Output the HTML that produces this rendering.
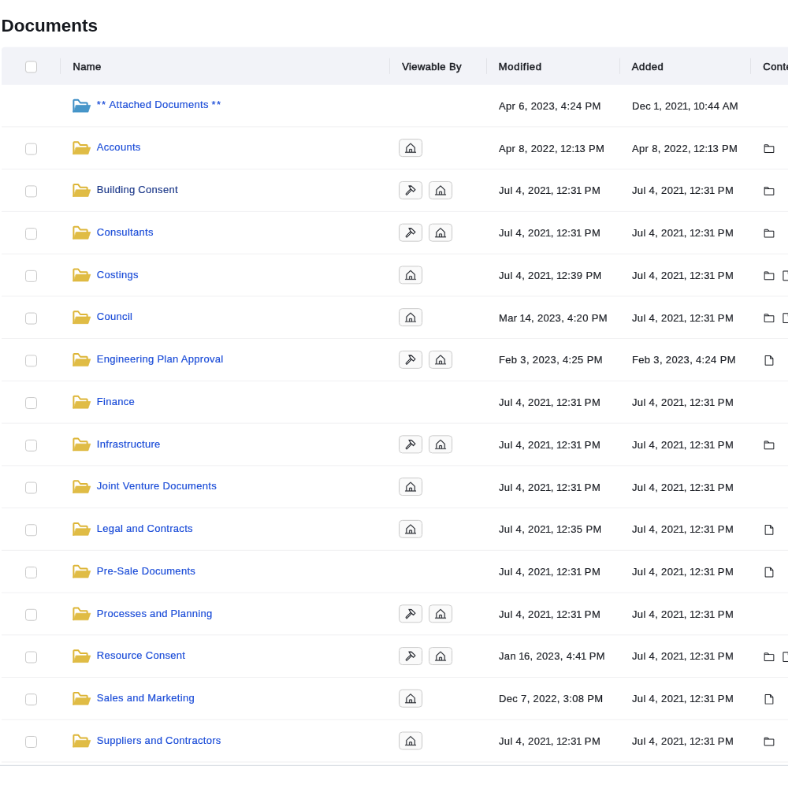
<!DOCTYPE html>
<html lang="en"><head><meta charset="utf-8"><title>Documents</title>
<style>
html,body{margin:0;padding:0;background:#fff;}
body{width:788px;height:788px;overflow:hidden;font-family:"Liberation Sans",Arial,sans-serif;}
#root{position:absolute;left:0;top:0;width:1000px;height:1000px;transform:scale(.788);transform-origin:0 0;will-change:transform;color:#1f2229;font-size:13px;line-height:15px;}
#root *{position:absolute;left:0;top:0;margin:0;box-sizing:border-box;white-space:nowrap;}
#root b{position:static;font-weight:inherit;margin:0 -.78px;}
#root i{position:static;font-style:normal;letter-spacing:1.25px;}
h1{font-size:22.5px;line-height:28px;font-weight:700;color:#15181e;}
.hd{background:#f2f3f8;border-radius:4px 0 0 0;width:1010px;}
.ht{color:#1a1c22;-webkit-text-stroke:.5px #1a1c22;letter-spacing:.35px;}
.vs{width:1px;height:20px;background:#e3e4e9;}
.cb{width:15px;height:15px;border:1px solid #c9c9c9;border-radius:3.5px;background:#fff;}
.sep{width:1010px;height:1px;background:#f0f0f2;}
.fo{color:#ddb536;}
.fo .ff{fill:#e0bc45;}
.fo.blue{color:#3c8dc5;}
.fo.blue .ff{fill:#4796c9;}
a{color:#1d4ed8;-webkit-text-stroke:.2px #1d4ed8;text-decoration:none;letter-spacing:.3px;}
a.hover{color:#1e3a8a;-webkit-text-stroke:.2px #1e3a8a;}
.d{color:#202329;-webkit-text-stroke:.2px #202329;letter-spacing:.34px;}
.bd{width:30px;height:23px;border:1px solid #cbcbcb;border-radius:4.5px;background:#fafafa;}
.bi{color:#2c2f36;}
.hs path{stroke:currentColor;stroke-width:4px;}
.ci{color:#22252b;}
.ci path{stroke:currentColor;stroke-width:1px;}
.end{width:1010px;height:1px;background:#d4dae0;}
</style></head><body><div id="root">
<h1 style="transform:translate(1.6px,18.6px)">Documents</h1>
<div class="hd" style="transform:translate(2px,59.8px);height:48.2px"></div>
<div class="cb" style="transform:translate(32px,77.4px)"></div>
<div class="vs" style="transform:translate(76px,73.9px)"></div><div class="vs" style="transform:translate(494px,73.9px)"></div><div class="vs" style="transform:translate(617px,73.9px)"></div><div class="vs" style="transform:translate(786px,73.9px)"></div><div class="vs" style="transform:translate(952px,73.9px)"></div><span class="ht" style="transform:translate(92.4px,76.79px);letter-spacing:0.4px">Name</span><span class="ht" style="transform:translate(510.2px,76.79px);letter-spacing:0.4px">Viewable By</span><span class="ht" style="transform:translate(632.8px,76.79px);letter-spacing:0.72px">Modified</span><span class="ht" style="transform:translate(801.8px,76.79px);letter-spacing:0.6px">Added</span><span class="ht" style="transform:translate(968.3px,76.79px);letter-spacing:0.45px">Contents</span>
<svg class="fo blue" width="26" height="26" viewBox="0 0 256 256" style="transform:translate(90px,120.5px)"><g stroke="currentColor" stroke-linejoin="round" stroke-linecap="round"><path d="M33.500,206.500 V69.500 a8,8 0 0 1 8,-8 H90 L118,98.500 H195 a8,8 0 0 1 8,8 V130" fill="none" stroke-width="19"/><path class="ff" d="M65,127.500 H244 L215,213 H28 Z" stroke-width="6"/></g></svg><a style="transform:translate(122.8px,125.29px)"><i>**</i> Attached Documents <i>**</i></a><span class="d" style="transform:translate(633px,127.04px)">Apr 6, 2023, 4:24 PM</span><span class="d" style="transform:translate(802px,127.04px)">Dec <b>1</b>, 202<b>1</b>, <b>1</b>0:44 AM</span><div class="sep" style="transform:translate(2px,160.4px)"></div>
<div class="cb" style="transform:translate(32px,181.62px)"></div><svg class="fo" width="26" height="26" viewBox="0 0 256 256" style="transform:translate(90px,174.07px)"><g stroke="currentColor" stroke-linejoin="round" stroke-linecap="round"><path d="M33.500,206.500 V69.500 a8,8 0 0 1 8,-8 H90 L118,98.500 H195 a8,8 0 0 1 8,8 V130" fill="none" stroke-width="19"/><path class="ff" d="M65,127.500 H244 L215,213 H28 Z" stroke-width="6"/></g></svg><a style="transform:translate(122.8px,179.36px)">Accounts</a><div class="bd" style="transform:translate(506.05px,176.17px)"></div><svg class="bi hs" width="15.1" height="15.1" viewBox="0 0 256 256" style="transform:translate(513.5px,180.44px)"><path d="M240,208H224V115.55a16,16,0,0,0-5.17-11.78l-80-75.48a1.14,1.14,0,0,1-.11-.11,16,16,0,0,0-21.53,0l-.11.11L37.17,103.77A16,16,0,0,0,32,115.55V208H16a8,8,0,0,0,0,16H240a8,8,0,0,0,0-16ZM48,115.55l.11-.1L128,40l79.9,75.43.11.1V208H160V160a16,16,0,0,0-16-16H112a16,16,0,0,0-16,16v48H48ZM144,208H112V160h32Z" fill="currentColor"/></svg><span class="d" style="transform:translate(633px,180.61px)">Apr 8, 2022, <b>1</b>2:<b>1</b>3 PM</span><span class="d" style="transform:translate(802px,180.61px)">Apr 8, 2022, <b>1</b>2:<b>1</b>3 PM</span><svg class="ci" width="15.6" height="15.6" viewBox="0 0 256 256" style="transform:translate(968.2px,180.87px)"><path d="M216,72H131.31L104,44.69A15.86,15.86,0,0,0,92.69,40H40A16,16,0,0,0,24,56V200.62A15.4,15.4,0,0,0,39.38,216H216.89A15.13,15.13,0,0,0,232,200.89V88A16,16,0,0,0,216,72ZM40,56H92.69l16,16H40ZM216,200H40V88H216Z" fill="currentColor"/></svg><div class="sep" style="transform:translate(2px,214.14px)"></div>
<div class="cb" style="transform:translate(32px,235.36px)"></div><svg class="fo" width="26" height="26" viewBox="0 0 256 256" style="transform:translate(90px,227.81px)"><g stroke="currentColor" stroke-linejoin="round" stroke-linecap="round"><path d="M33.500,206.500 V69.500 a8,8 0 0 1 8,-8 H90 L118,98.500 H195 a8,8 0 0 1 8,8 V130" fill="none" stroke-width="19"/><path class="ff" d="M65,127.500 H244 L215,213 H28 Z" stroke-width="6"/></g></svg><a class="hover" style="transform:translate(122.8px,233.1px)">Building Consent</a><div class="bd" style="transform:translate(506.05px,229.91px)"></div><svg class="bi" width="16" height="16" viewBox="0 0 256 256" style="transform:translate(512.65px,233.21px)"><g fill="none" stroke="currentColor" stroke-linecap="round" stroke-linejoin="round"><path d="M54,208 L144,118" stroke-width="46"/><path d="M54,208 L134,128" stroke="#fafafa" stroke-width="15"/><path d="M104,46 L150,46 L228,120 L190,158 L130,98 Z" stroke-width="19" fill="#fafafa"/><path d="M100,42 L148,42 L126,64 Z" stroke-width="8" fill="currentColor"/></g></svg><div class="bd" style="transform:translate(544.05px,229.91px)"></div><svg class="bi hs" width="15.1" height="15.1" viewBox="0 0 256 256" style="transform:translate(551.5px,234.18px)"><path d="M240,208H224V115.55a16,16,0,0,0-5.17-11.78l-80-75.48a1.14,1.14,0,0,1-.11-.11,16,16,0,0,0-21.53,0l-.11.11L37.17,103.77A16,16,0,0,0,32,115.55V208H16a8,8,0,0,0,0,16H240a8,8,0,0,0,0-16ZM48,115.55l.11-.1L128,40l79.9,75.43.11.1V208H160V160a16,16,0,0,0-16-16H112a16,16,0,0,0-16,16v48H48ZM144,208H112V160h32Z" fill="currentColor"/></svg><span class="d" style="transform:translate(633px,234.35px)">Jul 4, 202<b>1</b>, <b>1</b>2:3<b>1</b> PM</span><span class="d" style="transform:translate(802px,234.35px)">Jul 4, 202<b>1</b>, <b>1</b>2:3<b>1</b> PM</span><svg class="ci" width="15.6" height="15.6" viewBox="0 0 256 256" style="transform:translate(968.2px,234.61px)"><path d="M216,72H131.31L104,44.69A15.86,15.86,0,0,0,92.69,40H40A16,16,0,0,0,24,56V200.62A15.4,15.4,0,0,0,39.38,216H216.89A15.13,15.13,0,0,0,232,200.89V88A16,16,0,0,0,216,72ZM40,56H92.69l16,16H40ZM216,200H40V88H216Z" fill="currentColor"/></svg><div class="sep" style="transform:translate(2px,267.88px)"></div>
<div class="cb" style="transform:translate(32px,289.1px)"></div><svg class="fo" width="26" height="26" viewBox="0 0 256 256" style="transform:translate(90px,281.55px)"><g stroke="currentColor" stroke-linejoin="round" stroke-linecap="round"><path d="M33.500,206.500 V69.500 a8,8 0 0 1 8,-8 H90 L118,98.500 H195 a8,8 0 0 1 8,8 V130" fill="none" stroke-width="19"/><path class="ff" d="M65,127.500 H244 L215,213 H28 Z" stroke-width="6"/></g></svg><a style="transform:translate(122.8px,286.84px)">Consultants</a><div class="bd" style="transform:translate(506.05px,283.65px)"></div><svg class="bi" width="16" height="16" viewBox="0 0 256 256" style="transform:translate(512.65px,286.95px)"><g fill="none" stroke="currentColor" stroke-linecap="round" stroke-linejoin="round"><path d="M54,208 L144,118" stroke-width="46"/><path d="M54,208 L134,128" stroke="#fafafa" stroke-width="15"/><path d="M104,46 L150,46 L228,120 L190,158 L130,98 Z" stroke-width="19" fill="#fafafa"/><path d="M100,42 L148,42 L126,64 Z" stroke-width="8" fill="currentColor"/></g></svg><div class="bd" style="transform:translate(544.05px,283.65px)"></div><svg class="bi hs" width="15.1" height="15.1" viewBox="0 0 256 256" style="transform:translate(551.5px,287.92px)"><path d="M240,208H224V115.55a16,16,0,0,0-5.17-11.78l-80-75.48a1.14,1.14,0,0,1-.11-.11,16,16,0,0,0-21.53,0l-.11.11L37.17,103.77A16,16,0,0,0,32,115.55V208H16a8,8,0,0,0,0,16H240a8,8,0,0,0,0-16ZM48,115.55l.11-.1L128,40l79.9,75.43.11.1V208H160V160a16,16,0,0,0-16-16H112a16,16,0,0,0-16,16v48H48ZM144,208H112V160h32Z" fill="currentColor"/></svg><span class="d" style="transform:translate(633px,288.09px)">Jul 4, 202<b>1</b>, <b>1</b>2:3<b>1</b> PM</span><span class="d" style="transform:translate(802px,288.09px)">Jul 4, 202<b>1</b>, <b>1</b>2:3<b>1</b> PM</span><svg class="ci" width="15.6" height="15.6" viewBox="0 0 256 256" style="transform:translate(968.2px,288.35px)"><path d="M216,72H131.31L104,44.69A15.86,15.86,0,0,0,92.69,40H40A16,16,0,0,0,24,56V200.62A15.4,15.4,0,0,0,39.38,216H216.89A15.13,15.13,0,0,0,232,200.89V88A16,16,0,0,0,216,72ZM40,56H92.69l16,16H40ZM216,200H40V88H216Z" fill="currentColor"/></svg><div class="sep" style="transform:translate(2px,321.62px)"></div>
<div class="cb" style="transform:translate(32px,342.84px)"></div><svg class="fo" width="26" height="26" viewBox="0 0 256 256" style="transform:translate(90px,335.29px)"><g stroke="currentColor" stroke-linejoin="round" stroke-linecap="round"><path d="M33.500,206.500 V69.500 a8,8 0 0 1 8,-8 H90 L118,98.500 H195 a8,8 0 0 1 8,8 V130" fill="none" stroke-width="19"/><path class="ff" d="M65,127.500 H244 L215,213 H28 Z" stroke-width="6"/></g></svg><a style="transform:translate(122.8px,340.58px)">Costings</a><div class="bd" style="transform:translate(506.05px,337.39px)"></div><svg class="bi hs" width="15.1" height="15.1" viewBox="0 0 256 256" style="transform:translate(513.5px,341.66px)"><path d="M240,208H224V115.55a16,16,0,0,0-5.17-11.78l-80-75.48a1.14,1.14,0,0,1-.11-.11,16,16,0,0,0-21.53,0l-.11.11L37.17,103.77A16,16,0,0,0,32,115.55V208H16a8,8,0,0,0,0,16H240a8,8,0,0,0,0-16ZM48,115.55l.11-.1L128,40l79.9,75.43.11.1V208H160V160a16,16,0,0,0-16-16H112a16,16,0,0,0-16,16v48H48ZM144,208H112V160h32Z" fill="currentColor"/></svg><span class="d" style="transform:translate(633px,341.83px)">Jul 4, 202<b>1</b>, <b>1</b>2:39 PM</span><span class="d" style="transform:translate(802px,341.83px)">Jul 4, 202<b>1</b>, <b>1</b>2:3<b>1</b> PM</span><svg class="ci" width="15.6" height="15.6" viewBox="0 0 256 256" style="transform:translate(968.2px,342.09px)"><path d="M216,72H131.31L104,44.69A15.86,15.86,0,0,0,92.69,40H40A16,16,0,0,0,24,56V200.62A15.4,15.4,0,0,0,39.38,216H216.89A15.13,15.13,0,0,0,232,200.89V88A16,16,0,0,0,216,72ZM40,56H92.69l16,16H40ZM216,200H40V88H216Z" fill="currentColor"/></svg><svg class="ci" width="15.6" height="15.6" viewBox="0 0 256 256" style="transform:translate(991px,342.09px)"><path d="M213.66,82.34l-56-56A8,8,0,0,0,152,24H56A16,16,0,0,0,40,40V216a16,16,0,0,0,16,16H200a16,16,0,0,0,16-16V88A8,8,0,0,0,213.66,82.34ZM160,51.31,188.69,80H160ZM200,216H56V40h88V88a8,8,0,0,0,8,8h48V216Z" fill="currentColor"/></svg><div class="sep" style="transform:translate(2px,375.36px)"></div>
<div class="cb" style="transform:translate(32px,396.58px)"></div><svg class="fo" width="26" height="26" viewBox="0 0 256 256" style="transform:translate(90px,389.03px)"><g stroke="currentColor" stroke-linejoin="round" stroke-linecap="round"><path d="M33.500,206.500 V69.500 a8,8 0 0 1 8,-8 H90 L118,98.500 H195 a8,8 0 0 1 8,8 V130" fill="none" stroke-width="19"/><path class="ff" d="M65,127.500 H244 L215,213 H28 Z" stroke-width="6"/></g></svg><a style="transform:translate(122.8px,394.32px)">Council</a><div class="bd" style="transform:translate(506.05px,391.13px)"></div><svg class="bi hs" width="15.1" height="15.1" viewBox="0 0 256 256" style="transform:translate(513.5px,395.4px)"><path d="M240,208H224V115.55a16,16,0,0,0-5.17-11.78l-80-75.48a1.14,1.14,0,0,1-.11-.11,16,16,0,0,0-21.53,0l-.11.11L37.17,103.77A16,16,0,0,0,32,115.55V208H16a8,8,0,0,0,0,16H240a8,8,0,0,0,0-16ZM48,115.55l.11-.1L128,40l79.9,75.43.11.1V208H160V160a16,16,0,0,0-16-16H112a16,16,0,0,0-16,16v48H48ZM144,208H112V160h32Z" fill="currentColor"/></svg><span class="d" style="transform:translate(633px,395.57px)">Mar <b>1</b>4, 2023, 4:20 PM</span><span class="d" style="transform:translate(802px,395.57px)">Jul 4, 202<b>1</b>, <b>1</b>2:3<b>1</b> PM</span><svg class="ci" width="15.6" height="15.6" viewBox="0 0 256 256" style="transform:translate(968.2px,395.83px)"><path d="M216,72H131.31L104,44.69A15.86,15.86,0,0,0,92.69,40H40A16,16,0,0,0,24,56V200.62A15.4,15.4,0,0,0,39.38,216H216.89A15.13,15.13,0,0,0,232,200.89V88A16,16,0,0,0,216,72ZM40,56H92.69l16,16H40ZM216,200H40V88H216Z" fill="currentColor"/></svg><svg class="ci" width="15.6" height="15.6" viewBox="0 0 256 256" style="transform:translate(991px,395.83px)"><path d="M213.66,82.34l-56-56A8,8,0,0,0,152,24H56A16,16,0,0,0,40,40V216a16,16,0,0,0,16,16H200a16,16,0,0,0,16-16V88A8,8,0,0,0,213.66,82.34ZM160,51.31,188.69,80H160ZM200,216H56V40h88V88a8,8,0,0,0,8,8h48V216Z" fill="currentColor"/></svg><div class="sep" style="transform:translate(2px,429.1px)"></div>
<div class="cb" style="transform:translate(32px,450.32px)"></div><svg class="fo" width="26" height="26" viewBox="0 0 256 256" style="transform:translate(90px,442.77px)"><g stroke="currentColor" stroke-linejoin="round" stroke-linecap="round"><path d="M33.500,206.500 V69.500 a8,8 0 0 1 8,-8 H90 L118,98.500 H195 a8,8 0 0 1 8,8 V130" fill="none" stroke-width="19"/><path class="ff" d="M65,127.500 H244 L215,213 H28 Z" stroke-width="6"/></g></svg><a style="transform:translate(122.8px,448.06px)">Engineering Plan Approval</a><div class="bd" style="transform:translate(506.05px,444.87px)"></div><svg class="bi" width="16" height="16" viewBox="0 0 256 256" style="transform:translate(512.65px,448.17px)"><g fill="none" stroke="currentColor" stroke-linecap="round" stroke-linejoin="round"><path d="M54,208 L144,118" stroke-width="46"/><path d="M54,208 L134,128" stroke="#fafafa" stroke-width="15"/><path d="M104,46 L150,46 L228,120 L190,158 L130,98 Z" stroke-width="19" fill="#fafafa"/><path d="M100,42 L148,42 L126,64 Z" stroke-width="8" fill="currentColor"/></g></svg><div class="bd" style="transform:translate(544.05px,444.87px)"></div><svg class="bi hs" width="15.1" height="15.1" viewBox="0 0 256 256" style="transform:translate(551.5px,449.14px)"><path d="M240,208H224V115.55a16,16,0,0,0-5.17-11.78l-80-75.48a1.14,1.14,0,0,1-.11-.11,16,16,0,0,0-21.53,0l-.11.11L37.17,103.77A16,16,0,0,0,32,115.55V208H16a8,8,0,0,0,0,16H240a8,8,0,0,0,0-16ZM48,115.55l.11-.1L128,40l79.9,75.43.11.1V208H160V160a16,16,0,0,0-16-16H112a16,16,0,0,0-16,16v48H48ZM144,208H112V160h32Z" fill="currentColor"/></svg><span class="d" style="transform:translate(633px,449.31px)">Feb 3, 2023, 4:25 PM</span><span class="d" style="transform:translate(802px,449.31px)">Feb 3, 2023, 4:24 PM</span><svg class="ci" width="15.6" height="15.6" viewBox="0 0 256 256" style="transform:translate(968.2px,449.57px)"><path d="M213.66,82.34l-56-56A8,8,0,0,0,152,24H56A16,16,0,0,0,40,40V216a16,16,0,0,0,16,16H200a16,16,0,0,0,16-16V88A8,8,0,0,0,213.66,82.34ZM160,51.31,188.69,80H160ZM200,216H56V40h88V88a8,8,0,0,0,8,8h48V216Z" fill="currentColor"/></svg><div class="sep" style="transform:translate(2px,482.84px)"></div>
<div class="cb" style="transform:translate(32px,504.06px)"></div><svg class="fo" width="26" height="26" viewBox="0 0 256 256" style="transform:translate(90px,496.51px)"><g stroke="currentColor" stroke-linejoin="round" stroke-linecap="round"><path d="M33.500,206.500 V69.500 a8,8 0 0 1 8,-8 H90 L118,98.500 H195 a8,8 0 0 1 8,8 V130" fill="none" stroke-width="19"/><path class="ff" d="M65,127.500 H244 L215,213 H28 Z" stroke-width="6"/></g></svg><a style="transform:translate(122.8px,501.8px)">Finance</a><span class="d" style="transform:translate(633px,503.05px)">Jul 4, 202<b>1</b>, <b>1</b>2:3<b>1</b> PM</span><span class="d" style="transform:translate(802px,503.05px)">Jul 4, 202<b>1</b>, <b>1</b>2:3<b>1</b> PM</span><div class="sep" style="transform:translate(2px,536.58px)"></div>
<div class="cb" style="transform:translate(32px,557.8px)"></div><svg class="fo" width="26" height="26" viewBox="0 0 256 256" style="transform:translate(90px,550.25px)"><g stroke="currentColor" stroke-linejoin="round" stroke-linecap="round"><path d="M33.500,206.500 V69.500 a8,8 0 0 1 8,-8 H90 L118,98.500 H195 a8,8 0 0 1 8,8 V130" fill="none" stroke-width="19"/><path class="ff" d="M65,127.500 H244 L215,213 H28 Z" stroke-width="6"/></g></svg><a style="transform:translate(122.8px,555.54px)">Infrastructure</a><div class="bd" style="transform:translate(506.05px,552.35px)"></div><svg class="bi" width="16" height="16" viewBox="0 0 256 256" style="transform:translate(512.65px,555.65px)"><g fill="none" stroke="currentColor" stroke-linecap="round" stroke-linejoin="round"><path d="M54,208 L144,118" stroke-width="46"/><path d="M54,208 L134,128" stroke="#fafafa" stroke-width="15"/><path d="M104,46 L150,46 L228,120 L190,158 L130,98 Z" stroke-width="19" fill="#fafafa"/><path d="M100,42 L148,42 L126,64 Z" stroke-width="8" fill="currentColor"/></g></svg><div class="bd" style="transform:translate(544.05px,552.35px)"></div><svg class="bi hs" width="15.1" height="15.1" viewBox="0 0 256 256" style="transform:translate(551.5px,556.62px)"><path d="M240,208H224V115.55a16,16,0,0,0-5.17-11.78l-80-75.48a1.14,1.14,0,0,1-.11-.11,16,16,0,0,0-21.53,0l-.11.11L37.17,103.77A16,16,0,0,0,32,115.55V208H16a8,8,0,0,0,0,16H240a8,8,0,0,0,0-16ZM48,115.55l.11-.1L128,40l79.9,75.43.11.1V208H160V160a16,16,0,0,0-16-16H112a16,16,0,0,0-16,16v48H48ZM144,208H112V160h32Z" fill="currentColor"/></svg><span class="d" style="transform:translate(633px,556.79px)">Jul 4, 202<b>1</b>, <b>1</b>2:3<b>1</b> PM</span><span class="d" style="transform:translate(802px,556.79px)">Jul 4, 202<b>1</b>, <b>1</b>2:3<b>1</b> PM</span><svg class="ci" width="15.6" height="15.6" viewBox="0 0 256 256" style="transform:translate(968.2px,557.05px)"><path d="M216,72H131.31L104,44.69A15.86,15.86,0,0,0,92.69,40H40A16,16,0,0,0,24,56V200.62A15.4,15.4,0,0,0,39.38,216H216.89A15.13,15.13,0,0,0,232,200.89V88A16,16,0,0,0,216,72ZM40,56H92.69l16,16H40ZM216,200H40V88H216Z" fill="currentColor"/></svg><div class="sep" style="transform:translate(2px,590.32px)"></div>
<div class="cb" style="transform:translate(32px,611.54px)"></div><svg class="fo" width="26" height="26" viewBox="0 0 256 256" style="transform:translate(90px,603.99px)"><g stroke="currentColor" stroke-linejoin="round" stroke-linecap="round"><path d="M33.500,206.500 V69.500 a8,8 0 0 1 8,-8 H90 L118,98.500 H195 a8,8 0 0 1 8,8 V130" fill="none" stroke-width="19"/><path class="ff" d="M65,127.500 H244 L215,213 H28 Z" stroke-width="6"/></g></svg><a style="transform:translate(122.8px,609.28px)">Joint Venture Documents</a><div class="bd" style="transform:translate(506.05px,606.09px)"></div><svg class="bi hs" width="15.1" height="15.1" viewBox="0 0 256 256" style="transform:translate(513.5px,610.36px)"><path d="M240,208H224V115.55a16,16,0,0,0-5.17-11.78l-80-75.48a1.14,1.14,0,0,1-.11-.11,16,16,0,0,0-21.53,0l-.11.11L37.17,103.77A16,16,0,0,0,32,115.55V208H16a8,8,0,0,0,0,16H240a8,8,0,0,0,0-16ZM48,115.55l.11-.1L128,40l79.9,75.43.11.1V208H160V160a16,16,0,0,0-16-16H112a16,16,0,0,0-16,16v48H48ZM144,208H112V160h32Z" fill="currentColor"/></svg><span class="d" style="transform:translate(633px,610.53px)">Jul 4, 202<b>1</b>, <b>1</b>2:3<b>1</b> PM</span><span class="d" style="transform:translate(802px,610.53px)">Jul 4, 202<b>1</b>, <b>1</b>2:3<b>1</b> PM</span><div class="sep" style="transform:translate(2px,644.06px)"></div>
<div class="cb" style="transform:translate(32px,665.28px)"></div><svg class="fo" width="26" height="26" viewBox="0 0 256 256" style="transform:translate(90px,657.73px)"><g stroke="currentColor" stroke-linejoin="round" stroke-linecap="round"><path d="M33.500,206.500 V69.500 a8,8 0 0 1 8,-8 H90 L118,98.500 H195 a8,8 0 0 1 8,8 V130" fill="none" stroke-width="19"/><path class="ff" d="M65,127.500 H244 L215,213 H28 Z" stroke-width="6"/></g></svg><a style="transform:translate(122.8px,663.02px)">Legal and Contracts</a><div class="bd" style="transform:translate(506.05px,659.83px)"></div><svg class="bi hs" width="15.1" height="15.1" viewBox="0 0 256 256" style="transform:translate(513.5px,664.1px)"><path d="M240,208H224V115.55a16,16,0,0,0-5.17-11.78l-80-75.48a1.14,1.14,0,0,1-.11-.11,16,16,0,0,0-21.53,0l-.11.11L37.17,103.77A16,16,0,0,0,32,115.55V208H16a8,8,0,0,0,0,16H240a8,8,0,0,0,0-16ZM48,115.55l.11-.1L128,40l79.9,75.43.11.1V208H160V160a16,16,0,0,0-16-16H112a16,16,0,0,0-16,16v48H48ZM144,208H112V160h32Z" fill="currentColor"/></svg><span class="d" style="transform:translate(633px,664.27px)">Jul 4, 202<b>1</b>, <b>1</b>2:35 PM</span><span class="d" style="transform:translate(802px,664.27px)">Jul 4, 202<b>1</b>, <b>1</b>2:3<b>1</b> PM</span><svg class="ci" width="15.6" height="15.6" viewBox="0 0 256 256" style="transform:translate(968.2px,664.53px)"><path d="M213.66,82.34l-56-56A8,8,0,0,0,152,24H56A16,16,0,0,0,40,40V216a16,16,0,0,0,16,16H200a16,16,0,0,0,16-16V88A8,8,0,0,0,213.66,82.34ZM160,51.31,188.69,80H160ZM200,216H56V40h88V88a8,8,0,0,0,8,8h48V216Z" fill="currentColor"/></svg><div class="sep" style="transform:translate(2px,697.8px)"></div>
<div class="cb" style="transform:translate(32px,719.02px)"></div><svg class="fo" width="26" height="26" viewBox="0 0 256 256" style="transform:translate(90px,711.47px)"><g stroke="currentColor" stroke-linejoin="round" stroke-linecap="round"><path d="M33.500,206.500 V69.500 a8,8 0 0 1 8,-8 H90 L118,98.500 H195 a8,8 0 0 1 8,8 V130" fill="none" stroke-width="19"/><path class="ff" d="M65,127.500 H244 L215,213 H28 Z" stroke-width="6"/></g></svg><a style="transform:translate(122.8px,716.76px)">Pre-Sale Documents</a><span class="d" style="transform:translate(633px,718.01px)">Jul 4, 202<b>1</b>, <b>1</b>2:3<b>1</b> PM</span><span class="d" style="transform:translate(802px,718.01px)">Jul 4, 202<b>1</b>, <b>1</b>2:3<b>1</b> PM</span><svg class="ci" width="15.6" height="15.6" viewBox="0 0 256 256" style="transform:translate(968.2px,718.27px)"><path d="M213.66,82.34l-56-56A8,8,0,0,0,152,24H56A16,16,0,0,0,40,40V216a16,16,0,0,0,16,16H200a16,16,0,0,0,16-16V88A8,8,0,0,0,213.66,82.34ZM160,51.31,188.69,80H160ZM200,216H56V40h88V88a8,8,0,0,0,8,8h48V216Z" fill="currentColor"/></svg><div class="sep" style="transform:translate(2px,751.54px)"></div>
<div class="cb" style="transform:translate(32px,772.76px)"></div><svg class="fo" width="26" height="26" viewBox="0 0 256 256" style="transform:translate(90px,765.21px)"><g stroke="currentColor" stroke-linejoin="round" stroke-linecap="round"><path d="M33.500,206.500 V69.500 a8,8 0 0 1 8,-8 H90 L118,98.500 H195 a8,8 0 0 1 8,8 V130" fill="none" stroke-width="19"/><path class="ff" d="M65,127.500 H244 L215,213 H28 Z" stroke-width="6"/></g></svg><a style="transform:translate(122.8px,770.5px)">Processes and Planning</a><div class="bd" style="transform:translate(506.05px,767.31px)"></div><svg class="bi" width="16" height="16" viewBox="0 0 256 256" style="transform:translate(512.65px,770.61px)"><g fill="none" stroke="currentColor" stroke-linecap="round" stroke-linejoin="round"><path d="M54,208 L144,118" stroke-width="46"/><path d="M54,208 L134,128" stroke="#fafafa" stroke-width="15"/><path d="M104,46 L150,46 L228,120 L190,158 L130,98 Z" stroke-width="19" fill="#fafafa"/><path d="M100,42 L148,42 L126,64 Z" stroke-width="8" fill="currentColor"/></g></svg><div class="bd" style="transform:translate(544.05px,767.31px)"></div><svg class="bi hs" width="15.1" height="15.1" viewBox="0 0 256 256" style="transform:translate(551.5px,771.58px)"><path d="M240,208H224V115.55a16,16,0,0,0-5.17-11.78l-80-75.48a1.14,1.14,0,0,1-.11-.11,16,16,0,0,0-21.53,0l-.11.11L37.17,103.77A16,16,0,0,0,32,115.55V208H16a8,8,0,0,0,0,16H240a8,8,0,0,0,0-16ZM48,115.55l.11-.1L128,40l79.9,75.43.11.1V208H160V160a16,16,0,0,0-16-16H112a16,16,0,0,0-16,16v48H48ZM144,208H112V160h32Z" fill="currentColor"/></svg><span class="d" style="transform:translate(633px,771.75px)">Jul 4, 202<b>1</b>, <b>1</b>2:3<b>1</b> PM</span><span class="d" style="transform:translate(802px,771.75px)">Jul 4, 202<b>1</b>, <b>1</b>2:3<b>1</b> PM</span><div class="sep" style="transform:translate(2px,805.28px)"></div>
<div class="cb" style="transform:translate(32px,826.5px)"></div><svg class="fo" width="26" height="26" viewBox="0 0 256 256" style="transform:translate(90px,818.95px)"><g stroke="currentColor" stroke-linejoin="round" stroke-linecap="round"><path d="M33.500,206.500 V69.500 a8,8 0 0 1 8,-8 H90 L118,98.500 H195 a8,8 0 0 1 8,8 V130" fill="none" stroke-width="19"/><path class="ff" d="M65,127.500 H244 L215,213 H28 Z" stroke-width="6"/></g></svg><a style="transform:translate(122.8px,824.24px)">Resource Consent</a><div class="bd" style="transform:translate(506.05px,821.05px)"></div><svg class="bi" width="16" height="16" viewBox="0 0 256 256" style="transform:translate(512.65px,824.35px)"><g fill="none" stroke="currentColor" stroke-linecap="round" stroke-linejoin="round"><path d="M54,208 L144,118" stroke-width="46"/><path d="M54,208 L134,128" stroke="#fafafa" stroke-width="15"/><path d="M104,46 L150,46 L228,120 L190,158 L130,98 Z" stroke-width="19" fill="#fafafa"/><path d="M100,42 L148,42 L126,64 Z" stroke-width="8" fill="currentColor"/></g></svg><div class="bd" style="transform:translate(544.05px,821.05px)"></div><svg class="bi hs" width="15.1" height="15.1" viewBox="0 0 256 256" style="transform:translate(551.5px,825.32px)"><path d="M240,208H224V115.55a16,16,0,0,0-5.17-11.78l-80-75.48a1.14,1.14,0,0,1-.11-.11,16,16,0,0,0-21.53,0l-.11.11L37.17,103.77A16,16,0,0,0,32,115.55V208H16a8,8,0,0,0,0,16H240a8,8,0,0,0,0-16ZM48,115.55l.11-.1L128,40l79.9,75.43.11.1V208H160V160a16,16,0,0,0-16-16H112a16,16,0,0,0-16,16v48H48ZM144,208H112V160h32Z" fill="currentColor"/></svg><span class="d" style="transform:translate(633px,825.49px)">Jan <b>1</b>6, 2023, 4:4<b>1</b> PM</span><span class="d" style="transform:translate(802px,825.49px)">Jul 4, 202<b>1</b>, <b>1</b>2:3<b>1</b> PM</span><svg class="ci" width="15.6" height="15.6" viewBox="0 0 256 256" style="transform:translate(968.2px,825.75px)"><path d="M216,72H131.31L104,44.69A15.86,15.86,0,0,0,92.69,40H40A16,16,0,0,0,24,56V200.62A15.4,15.4,0,0,0,39.38,216H216.89A15.13,15.13,0,0,0,232,200.89V88A16,16,0,0,0,216,72ZM40,56H92.69l16,16H40ZM216,200H40V88H216Z" fill="currentColor"/></svg><svg class="ci" width="15.6" height="15.6" viewBox="0 0 256 256" style="transform:translate(991px,825.75px)"><path d="M213.66,82.34l-56-56A8,8,0,0,0,152,24H56A16,16,0,0,0,40,40V216a16,16,0,0,0,16,16H200a16,16,0,0,0,16-16V88A8,8,0,0,0,213.66,82.34ZM160,51.31,188.69,80H160ZM200,216H56V40h88V88a8,8,0,0,0,8,8h48V216Z" fill="currentColor"/></svg><div class="sep" style="transform:translate(2px,859.02px)"></div>
<div class="cb" style="transform:translate(32px,880.24px)"></div><svg class="fo" width="26" height="26" viewBox="0 0 256 256" style="transform:translate(90px,872.69px)"><g stroke="currentColor" stroke-linejoin="round" stroke-linecap="round"><path d="M33.500,206.500 V69.500 a8,8 0 0 1 8,-8 H90 L118,98.500 H195 a8,8 0 0 1 8,8 V130" fill="none" stroke-width="19"/><path class="ff" d="M65,127.500 H244 L215,213 H28 Z" stroke-width="6"/></g></svg><a style="transform:translate(122.8px,877.98px)">Sales and Marketing</a><div class="bd" style="transform:translate(506.05px,874.79px)"></div><svg class="bi hs" width="15.1" height="15.1" viewBox="0 0 256 256" style="transform:translate(513.5px,879.06px)"><path d="M240,208H224V115.55a16,16,0,0,0-5.17-11.78l-80-75.48a1.14,1.14,0,0,1-.11-.11,16,16,0,0,0-21.53,0l-.11.11L37.17,103.77A16,16,0,0,0,32,115.55V208H16a8,8,0,0,0,0,16H240a8,8,0,0,0,0-16ZM48,115.55l.11-.1L128,40l79.9,75.43.11.1V208H160V160a16,16,0,0,0-16-16H112a16,16,0,0,0-16,16v48H48ZM144,208H112V160h32Z" fill="currentColor"/></svg><span class="d" style="transform:translate(633px,879.23px)">Dec 7, 2022, 3:08 PM</span><span class="d" style="transform:translate(802px,879.23px)">Jul 4, 202<b>1</b>, <b>1</b>2:3<b>1</b> PM</span><svg class="ci" width="15.6" height="15.6" viewBox="0 0 256 256" style="transform:translate(968.2px,879.49px)"><path d="M213.66,82.34l-56-56A8,8,0,0,0,152,24H56A16,16,0,0,0,40,40V216a16,16,0,0,0,16,16H200a16,16,0,0,0,16-16V88A8,8,0,0,0,213.66,82.34ZM160,51.31,188.69,80H160ZM200,216H56V40h88V88a8,8,0,0,0,8,8h48V216Z" fill="currentColor"/></svg><div class="sep" style="transform:translate(2px,912.76px)"></div>
<div class="cb" style="transform:translate(32px,933.98px)"></div><svg class="fo" width="26" height="26" viewBox="0 0 256 256" style="transform:translate(90px,926.43px)"><g stroke="currentColor" stroke-linejoin="round" stroke-linecap="round"><path d="M33.500,206.500 V69.500 a8,8 0 0 1 8,-8 H90 L118,98.500 H195 a8,8 0 0 1 8,8 V130" fill="none" stroke-width="19"/><path class="ff" d="M65,127.500 H244 L215,213 H28 Z" stroke-width="6"/></g></svg><a style="transform:translate(122.8px,931.72px)">Suppliers and Contractors</a><div class="bd" style="transform:translate(506.05px,928.53px)"></div><svg class="bi hs" width="15.1" height="15.1" viewBox="0 0 256 256" style="transform:translate(513.5px,932.8px)"><path d="M240,208H224V115.55a16,16,0,0,0-5.17-11.78l-80-75.48a1.14,1.14,0,0,1-.11-.11,16,16,0,0,0-21.53,0l-.11.11L37.17,103.77A16,16,0,0,0,32,115.55V208H16a8,8,0,0,0,0,16H240a8,8,0,0,0,0-16ZM48,115.55l.11-.1L128,40l79.9,75.43.11.1V208H160V160a16,16,0,0,0-16-16H112a16,16,0,0,0-16,16v48H48ZM144,208H112V160h32Z" fill="currentColor"/></svg><span class="d" style="transform:translate(633px,932.97px)">Jul 4, 202<b>1</b>, <b>1</b>2:3<b>1</b> PM</span><span class="d" style="transform:translate(802px,932.97px)">Jul 4, 202<b>1</b>, <b>1</b>2:3<b>1</b> PM</span><svg class="ci" width="15.6" height="15.6" viewBox="0 0 256 256" style="transform:translate(968.2px,933.23px)"><path d="M216,72H131.31L104,44.69A15.86,15.86,0,0,0,92.69,40H40A16,16,0,0,0,24,56V200.62A15.4,15.4,0,0,0,39.38,216H216.89A15.13,15.13,0,0,0,232,200.89V88A16,16,0,0,0,216,72ZM40,56H92.69l16,16H40ZM216,200H40V88H216Z" fill="currentColor"/></svg><div class="sep" style="transform:translate(2px,966.5px)"></div>
<div class="end" style="transform:translate(0px,970.8px)"></div>
</div></body></html>
